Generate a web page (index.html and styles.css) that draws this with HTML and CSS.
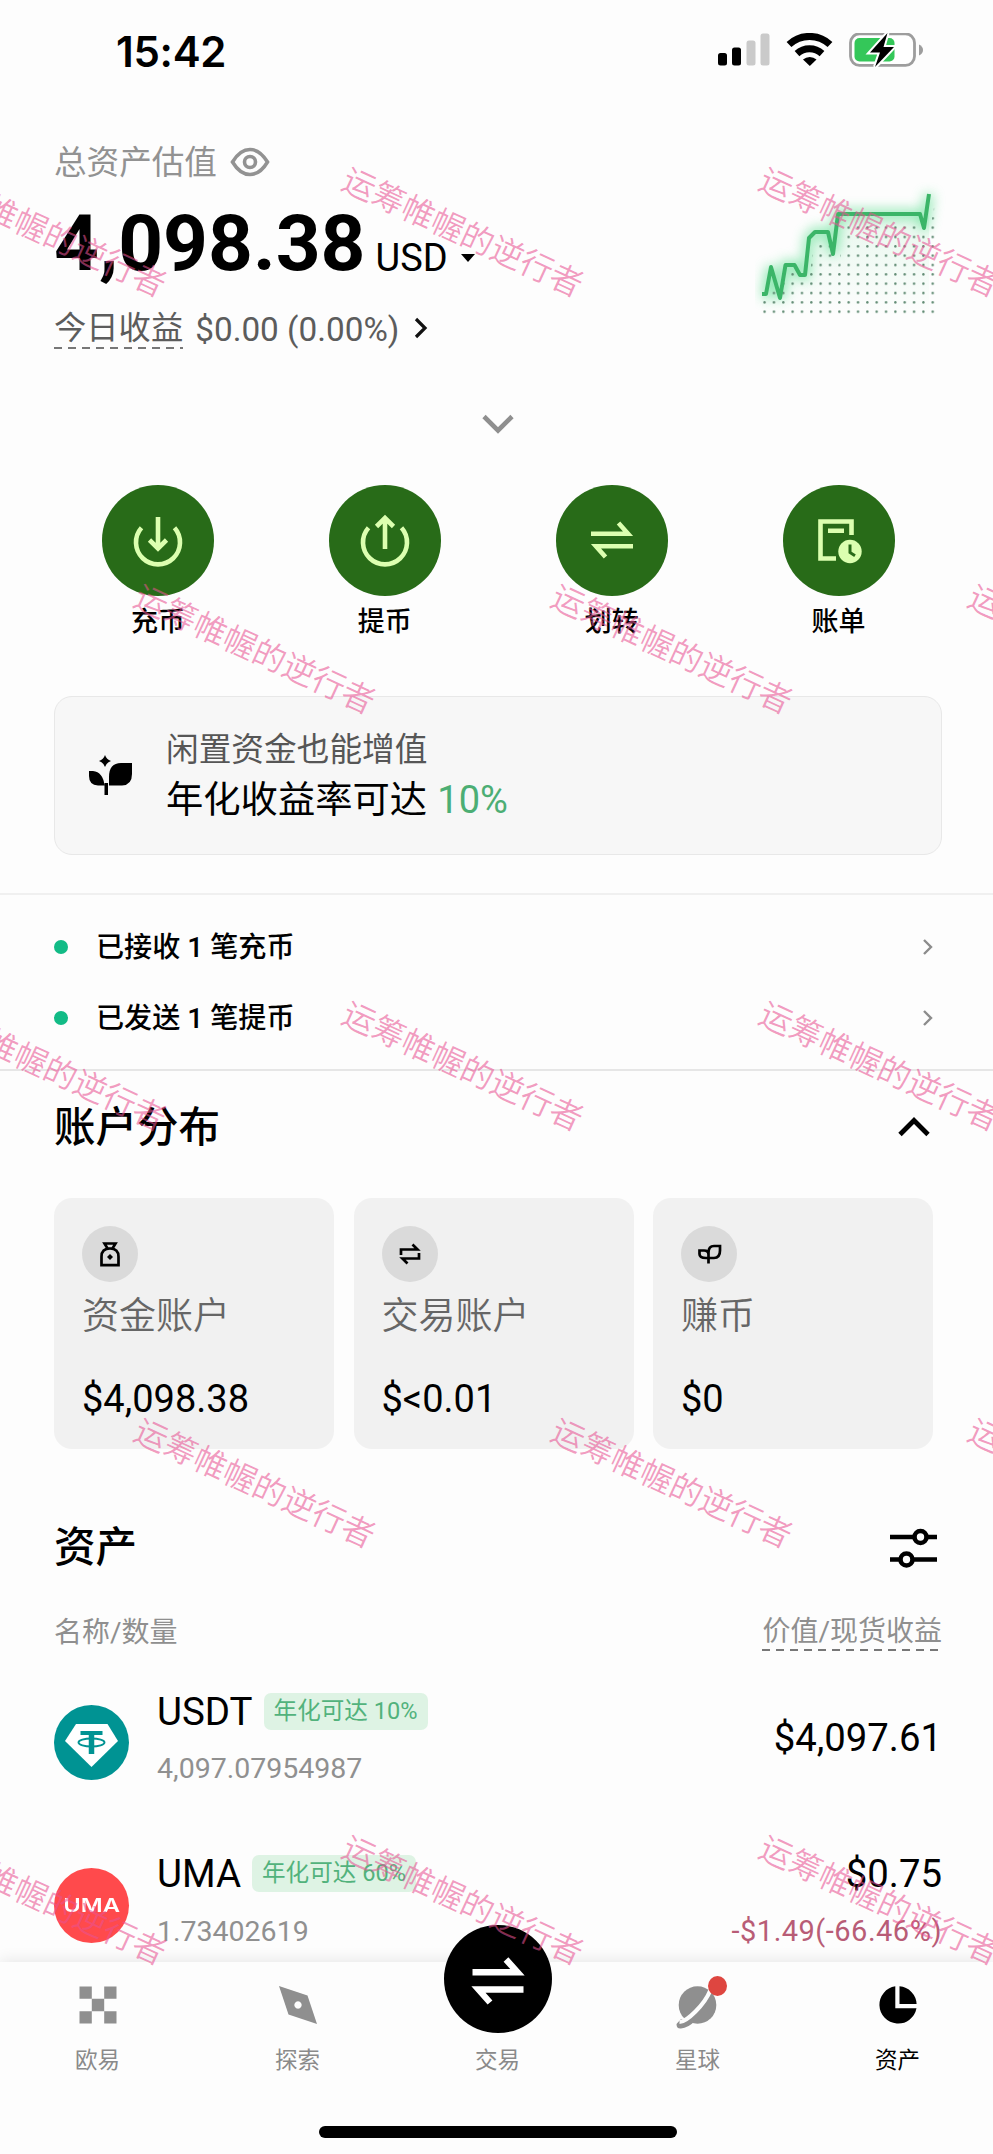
FILE: index.html
```html
<!DOCTYPE html>
<html lang="zh-CN">
<head>
<meta charset="utf-8">
<title>资产</title>
<link rel="stylesheet" href="styles.css">
</head>
<body>
<div class="screen">
  <header class="status">
    <span class="time">15:42</span>
    <svg class="status-icons" width="210" height="40" viewBox="0 0 210 40">
      <rect x="4" y="20" width="9" height="12.500" rx="2.500"/>
      <rect x="18" y="14.500" width="9" height="18" rx="2.500"/>
      <g fill="#cacaca"><rect x="32.500" y="7.500" width="9" height="25" rx="2.500"/><rect x="46.500" y="0.500" width="9" height="32" rx="2.500"/></g>
      <g fill="none" stroke="#000" stroke-width="7">
        <path d="M75 11.500a30 30 0 0 1 41 0"/>
        <path d="M83 20.700a18.500 18.500 0 0 1 25 0"/>
      </g>
      <path d="M89 26.500a10 10 0 0 1 13.500 0l-6.700 6.500z"/>
      <rect x="136.500" y="0.800" width="64" height="31.500" rx="9" fill="#fff" stroke="#9d9d9d" stroke-width="2.800"/>
      <rect x="140.500" y="5" width="40" height="23.500" rx="5" fill="#34c759"/>
      <path d="M205 11.500q4 2 4 5.500t-4 5.500z" fill="#9d9d9d"/>
      <path d="M173.500 0l-17.500 19.500h10l-5 14.500 19-20h-10.500z" stroke="#fff" stroke-width="4" paint-order="stroke"/>
    </svg>
  </header>

  <section class="hero">
    <div class="hero-text">
      <div class="estimate"><span>总资产估值</span>
        <svg width="40" height="30" viewBox="0 0 40 30" fill="none" stroke="#929292" stroke-width="3.600"><path d="M2.500 15Q10 2.500 20 2.500T37.500 15Q30 27.500 20 27.500T2.500 15z"/><circle cx="20" cy="15" r="5.500"/></svg>
      </div>
      <div class="total"><span class="total-num">4,098.38</span><span class="total-cur">USD</span><i class="caret"></i></div>
      <div class="today"><span class="dashed">今日收益</span><span class="today-num">$0.00 (0.00%)</span>
        <svg width="14" height="22" viewBox="0 0 14 22" fill="none" stroke="#111" stroke-width="3.200"><path d="M2 2l9 9-9 9"/></svg>
      </div>
    </div>
    <svg class="chart" width="200" height="150" viewBox="0 0 200 150">
      <defs>
        <pattern id="dots" x="8.300" y="0.300" width="9.340" height="9.340" patternUnits="userSpaceOnUse"><circle cx="1.300" cy="1.300" r="1.200" fill="#5f8a72"/></pattern>
        <filter id="glow" x="-20%" y="-20%" width="140%" height="140%"><feGaussianBlur stdDeviation="6"/></filter>
        <linearGradient id="fade" x2="0" y2="1"><stop offset="0" stop-color="#5fd88d" stop-opacity=".16"/><stop offset="1" stop-color="#5fd88d" stop-opacity="0"/></linearGradient>
      </defs>
      <path d="M7 124h4l5-27 9 31 5.500-33h9l5.500 10h5l4-37 6-6h13l5 22 5-40h82l4 14 5-34V146H7z" fill="url(#fade)"/>
      <path d="M7 124h4l5-27 9 31 5.500-33h9l5.500 10h5l4-37 6-6h13l5 22 5-40h82l4 14 5-34" fill="none" stroke="#55dd8b" stroke-width="10" opacity=".6" filter="url(#glow)"/>
      <path d="M7 127h4l5-15 9 19 6-28h10l7 8h6l5-37h20l5 22 5-44h80l5 14 6-34V146H7z" fill="url(#dots)"/>
      <path d="M7 124h4l5-27 9 31 5.500-33h9l5.500 10h5l4-37 6-6h13l5 22 5-40h82l4 14 5-34" fill="none" stroke="#3bb568" stroke-width="4" stroke-linejoin="round"/>
    </svg>
  </section>
  <div class="expand"><svg width="32" height="20" viewBox="0 0 32 20" fill="none" stroke="#8f8f8f" stroke-width="4.600"><path d="M2 2.500l14 14 14-14"/></svg></div>

  <nav class="actions">
    <div class="action"><span class="disc"><svg width="56" height="56" viewBox="0 0 56 56"><path d="M11.500 15.800a22 22 0 1 0 33 0" /><path d="M28 5v30M19.500 28l8.500 8.500 8.500-8.500"/></svg></span>充币</div>
    <div class="action"><span class="disc"><svg width="56" height="56" viewBox="0 0 56 56"><path d="M11.500 15.800a22 22 0 1 0 33 0"/><path d="M28 37V7M19.500 14.500L28 6l8.500 8.500"/></svg></span>提币</div>
    <div class="action"><span class="disc"><svg width="56" height="56" viewBox="0 0 56 56"><path d="M7 21.700h37L34.500 11M49 34.300H12L21.500 45"/></svg></span>划转</div>
    <div class="action"><span class="disc"><svg width="56" height="56" viewBox="0 0 56 56"><path d="M25 46.500H9.500v-37h31V23M17 18.700h16"/><circle cx="39" cy="39.500" r="11.700" class="solid"/><path d="M39 32.500v8l5 3.200" class="hand"/></svg></span>账单</div>
  </nav>

  <section class="promo">
    <svg width="44" height="42" viewBox="0 0 44 42"><path d="M16 0q1.500 4.500 6 6-4.500 1.500-6 6-1.500-4.500-6-6 4.500-1.500 6-6zM43 8v11q0 11-10 11.500H20V22Q20 8 32 8zM0 16h4q10 1 11.500 14.500H9Q0 30 0 21zM15.500 28h3.500v12h-3.500z"/></svg>
    <div class="promo-text"><div class="promo-a">闲置资金也能增值</div><div class="promo-b">年化收益率可达 <b>10%</b></div></div>
  </section>

  <section class="notices">
    <div class="notice"><i></i><span>已接收 1 笔充币</span><svg width="12" height="18" viewBox="0 0 12 18"><path d="M2 2l7 7-7 7"/></svg></div>
    <div class="notice"><i></i><span>已发送 1 笔提币</span><svg width="12" height="18" viewBox="0 0 12 18"><path d="M2 2l7 7-7 7"/></svg></div>
  </section>

  <section class="accounts">
    <div class="section-head"><h2>账户分布</h2><svg class="up" width="32" height="20" viewBox="0 0 32 20" fill="none" stroke="#000" stroke-width="4.800"><path d="M2 17.500l14-14 14 14"/></svg></div>
    <div class="cards">
      <article class="card"><span class="mini"><svg width="28" height="28" viewBox="0 0 28 28"><path d="M8.500 3.500h11l-3 5h-5zM5.500 25.200v-8.500Q5.500 8.500 14 8.500t8.500 8.200v8.500z"/><path d="M14 14l3 3-3 3-3-3z" fill="#000" stroke="none"/></svg></span><div class="card-name">资金账户</div><div class="card-sum">$4,098.38</div></article>
      <article class="card"><span class="mini"><svg width="28" height="28" viewBox="0 0 28 28"><path d="M5 15V9.500h16.500L16.500 4.500M23 13v5.500H6.500l5 5"/></svg></span><div class="card-name">交易账户</div><div class="card-sum">$&lt;0.01</div></article>
      <article class="card"><span class="mini"><svg width="28" height="28" viewBox="0 0 28 28"><path d="M13.500 23.500v-11Q13.500 6 19 6h6v4.500q0 7.500-6 7.500h-8q-6.500 0-6.500-4v-3.500H9q4.500 0 4.500 4"/></svg></span><div class="card-name">赚币</div><div class="card-sum">$0</div></article>
    </div>
  </section>

  <section class="assets">
    <div class="assets-head"><h2>资产</h2><svg width="47" height="40" viewBox="0 0 47 40" fill="none" stroke="#000" stroke-width="4.600"><path d="M0 9h24M37 9h10M0 31.500h10M23 31.500h24"/><circle cx="30.500" cy="9" r="6"/><circle cx="16.500" cy="31.500" r="6"/></svg></div>
    <div class="cols"><span>名称/数量</span><span class="dashed">价值/现货收益</span></div>
    <div class="asset">
      <svg class="coin" width="75" height="75" viewBox="0 0 75 75"><circle cx="37.500" cy="37.500" r="37.500" fill="#009393"/><path d="M22 19h31.500L64 36 37.500 62 11 36z" fill="#fff"/><g fill="none" stroke="#009393"><path d="M26.500 28h22" stroke-width="4"/><path d="M37.500 28v21" stroke-width="5.500"/><ellipse cx="37.500" cy="37.500" rx="13" ry="4" stroke-width="1.900"/></g></svg>
      <div class="asset-info"><div class="asset-name">USDT<em>年化可达 10%</em></div><div class="asset-qty">4,097.07954987</div></div>
      <div class="asset-value mid"><div>$4,097.61</div></div>
    </div>
    <div class="asset">
      <div class="coin uma"><span>UMA</span></div>
      <div class="asset-info"><div class="asset-name">UMA<em>年化可达 60%</em></div><div class="asset-qty">1.73402619</div></div>
      <div class="asset-value"><div>$0.75</div><div class="loss">-$1.49(-66.46%)</div></div>
    </div>
  </section>

  <nav class="tabbar">
    <div class="tabs">
      <div class="tab"><svg width="38" height="38" viewBox="0 0 38 38"><path d="M0.500 0.500h12.300v12.300h-12.300zM25.200 0.500h12.300v12.300h-12.300zM12.800 12.800h12.400v12.400h-12.400zM0.500 25.200h12.300v12.300h-12.300zM25.200 25.200h12.300v12.300h-12.300z"/></svg><span>欧易</span></div>
      <div class="tab"><svg width="38" height="38" viewBox="0 0 38 38"><path fill-rule="evenodd" d="M0 0l28.500 9.500L38 38 9.500 28.500zM19 15.300a3.700 3.700 0 1 0 .01 0z"/></svg><span>探索</span></div>
      <div class="tab trade"><i class="trade-btn"><svg width="56" height="56" viewBox="0 0 56 56"><path d="M2.500 21.300h45L36 8.500M53.500 38.500h-45L20 51.500"/></svg></i><span>交易</span></div>
      <div class="tab"><svg class="planet" width="42" height="44" viewBox="0 0 42 44"><circle cx="21.500" cy="19" r="18.800"/><path d="M0.500 38Q0.500 43 5 42.500 12 42 19 35L5 33z"/><path d="M3.500 36Q9 36 19.500 25.500T34.500 4" fill="none" stroke="#fdfdfd" stroke-width="4.200"/></svg><i class="badge"></i><span>星球</span></div>
      <div class="tab active"><svg width="38" height="38" viewBox="0 0 38 38"><path d="M16.300 0.300v22H37.500A18.700 18.700 0 1 1 16.300 0.300zM20.500 0.300A18.500 18.500 0 0 1 37.600 18H20.500z"/></svg><span>资产</span></div>
    </div>
    <div class="home"></div>
  </nav>

  <div class="watermarks">
    <div class="wm-row shift"><span>运筹帷幄的逆行者</span><span>运筹帷幄的逆行者</span><span>运筹帷幄的逆行者</span></div>
    <div class="wm-row"><span>运筹帷幄的逆行者</span><span>运筹帷幄的逆行者</span><span>运筹帷幄的逆行者</span></div>
    <div class="wm-row shift"><span>运筹帷幄的逆行者</span><span>运筹帷幄的逆行者</span><span>运筹帷幄的逆行者</span></div>
    <div class="wm-row"><span>运筹帷幄的逆行者</span><span>运筹帷幄的逆行者</span><span>运筹帷幄的逆行者</span></div>
    <div class="wm-row shift"><span>运筹帷幄的逆行者</span><span>运筹帷幄的逆行者</span><span>运筹帷幄的逆行者</span></div>
  </div>
</div>
</body>
</html>
```
FILE: styles.css
```css
* { box-sizing: border-box; }
body { margin: 0; background: #fdfdfd; }
svg { display: block; flex: none; }
h2 { margin: 0; font-size: 41.500px; font-weight: 500; line-height: 60px; }

.screen {
  position: relative;
  width: 993px;
  height: 2154px;
  overflow: hidden;
  background: #fdfdfd;
  color: #000;
  font-family: Roboto, "Noto Sans CJK SC", sans-serif;
  white-space: nowrap;
}

.status { display: flex; justify-content: space-between; height: 103px; padding: 33px 69px 0 116px; }
.time { font: 600 42px/38px Inter, sans-serif; letter-spacing: -0.300px; }

.hero { display: flex; justify-content: space-between; height: 296px; padding: 29px 54px 0; }
.estimate { display: flex; align-items: center; gap: 13px; height: 58px; color: #929292; font-size: 32.600px; }
.estimate span { margin-top: -3px; }
.estimate svg { margin-top: 2px; }
.total { display: flex; align-items: center; height: 104px; }
.total-num { font-size: 78.300px; font-weight: 700; padding-top: 2px; }
.total-cur { margin: 31px 0 0 10px; font-size: 38px; }
.caret { margin: 31px 0 0 13px; border: 7px solid transparent; border-top: 8px solid #000; border-bottom: 0; }
.today { display: flex; align-items: center; height: 68px; color: #5c5c5c; font-size: 32.300px; }
.today-num { margin: 2px 15px 0 12px; font-size: 33.300px; font-weight: 450; }
.dashed {
  padding-bottom: 5px;
  background: repeating-linear-gradient(90deg, #777 0 8px, transparent 8px 14px) left bottom / 100% 2px no-repeat;
}
.today .dashed { padding: 2px 0 1px; line-height: 39px; }
.chart { margin: 38px -16px 0 0; }
.expand { display: flex; justify-content: center; align-items: center; height: 50px; padding-left: 3px; }

.actions { display: grid; grid-template-columns: repeat(4, 1fr); padding: 36px 41px 0 44.600px; }
.action { display: flex; flex-direction: column; align-items: center; gap: 13.500px; height: 150px; font-size: 27px; font-weight: 500; line-height: 26px; }
.disc { display: grid; place-items: center; width: 112px; height: 112px; border-radius: 50%; background: #286b18; }
.disc svg { fill: none; stroke: #dcffb0; stroke-width: 4.600px; }
.disc .solid { fill: #dcffb0; stroke: none; }
.disc .hand { stroke: #286b18; stroke-width: 3px; }

.promo {
  display: flex;
  align-items: center;
  height: 159px;
  margin: 61px 51px 0 54px;
  padding-left: 34px;
  border: 1.500px solid #e8e8e8;
  border-radius: 18px;
  background: #f7f7f7;
}
.promo-text { margin: -2px 0 0 33px; }
.promo-a { color: #565656; font-size: 32.700px; line-height: 50px; }
.promo-b { font-size: 37.300px; line-height: 50px; }
.promo-b b { margin-left: 1px; color: #4cae74; font-size: 38px; font-weight: 400; }

.notices { margin-top: 38px; padding: 16px 59px 16px 54px; border-top: 2px solid #f0f0f0; border-bottom: 2px solid #e6e6e6; }
.notice { display: flex; align-items: center; height: 71px; font-size: 28.100px; font-weight: 500; }
.notice span { margin-top: -4px; }
.notice i { width: 14px; height: 14px; margin-right: 28px; border-radius: 50%; background: #12bb86; }
.notice svg { margin-left: auto; fill: none; stroke: #8c8c8c; stroke-width: 2.400px; }

.accounts { padding: 0 54px; }
.section-head { display: flex; justify-content: space-between; align-items: center; height: 112px; }
.section-head h2 { padding-top: 2px; }
.up { margin-right: 9px; }
.cards { display: grid; grid-template-columns: repeat(3, 280px); gap: 19.500px; margin-top: 15px; }
.card { height: 251px; padding: 28px; border-radius: 18px; background: #f1f1f1; }
.mini { display: grid; place-items: center; width: 56px; height: 56px; border-radius: 50%; background: #dadada; }
.mini svg { fill: none; stroke: #000; stroke-width: 2.700px; }
.card-name { margin-top: 13px; color: #666; font-size: 37px; font-weight: 350; line-height: 44px; }
.card-sum { margin-top: 38px; font-size: 38px; font-weight: 450; line-height: 44px; }

.assets { padding: 69px 51px 0 54px; }
.assets-head { display: flex; justify-content: space-between; align-items: center; height: 60px; padding-right: 5px; }
.cols { display: flex; justify-content: space-between; height: 40px; margin-top: 34px; color: #8f8f8f; font-size: 28px; line-height: 42px; }
.cols .dashed { height: 39px; padding: 0; line-height: 40px; }
.asset { display: flex; height: 162.500px; padding-top: 22px; }
.cols + .asset { margin-top: 9px; }
.coin { width: 75px; height: 75px; margin-top: 22px; }
.uma { display: grid; place-items: center; border-radius: 50%; background: #ff4a4c; color: #fff; font: 600 19px/19px Inter, sans-serif; }
.uma span { transform: scaleX(1.250); }
.asset-info { margin-left: 28px; }
.asset-name { display: flex; align-items: center; height: 56px; font-size: 38.500px; }
.asset-name em { margin-left: 11px; padding: 0 10px; border-radius: 7px; background: #def3e4; color: #52b27c; font: 400 23.600px/37px Roboto, "Noto Sans CJK SC", sans-serif; }
.asset-qty { color: #909090; font-size: 28.500px; font-weight: 450; line-height: 60px; }
.asset-value { margin-left: auto; text-align: right; font-size: 38.300px; font-weight: 450; line-height: 56px; }
.mid { padding-top: 27px; }
.loss { color: #b85c76; font-size: 29px; letter-spacing: 0.500px; line-height: 58px; }

.tabbar {
  position: absolute;
  left: 0;
  bottom: 0;
  width: 993px;
  height: 192px;
  background: #fdfdfd;
  box-shadow: 0 -2px 14px rgba(0, 0, 0, 0.09);
}
.tabs { display: flex; padding-top: 24px; margin: 0 -6px 0 -2.500px; }
.tab { position: relative; display: flex; flex-direction: column; align-items: center; width: 200px; height: 114px; flex: none; color: #8a8a8a; font-size: 22.500px; line-height: 32px; }
.tab svg { fill: #8f8f8f; }
.tab span { height: 56px; margin-top: auto; }
.tab.active { color: #000; }
.tab.active svg { fill: #000; }
.trade-btn { display: grid; place-items: center; width: 108px; height: 108px; margin-top: -61px; border-radius: 50%; background: #000; }
.tab .trade-btn svg { fill: none; stroke: #fff; stroke-width: 6.400px; }
.planet { margin-right: 2px; }
.badge { position: absolute; top: -10px; left: 110px; width: 19px; height: 20px; border-radius: 50%; background: #de4640; }
.home { width: 358px; height: 12px; margin: 26px 0 0 319px; border-radius: 6px; background: #000; }

.watermarks { position: absolute; inset: 0; overflow: hidden; padding-top: 209px; color: rgba(232, 82, 146, 0.58); font-size: 32.600px; font-weight: 350; line-height: 48px; pointer-events: none; }
.wm-row { display: flex; height: 417px; margin-left: 46px; }
.wm-row.shift { margin-left: -163px; }
.wm-row span { width: 417px; height: 48px; flex: none; text-align: center; transform: rotate(24.800deg); }
```
